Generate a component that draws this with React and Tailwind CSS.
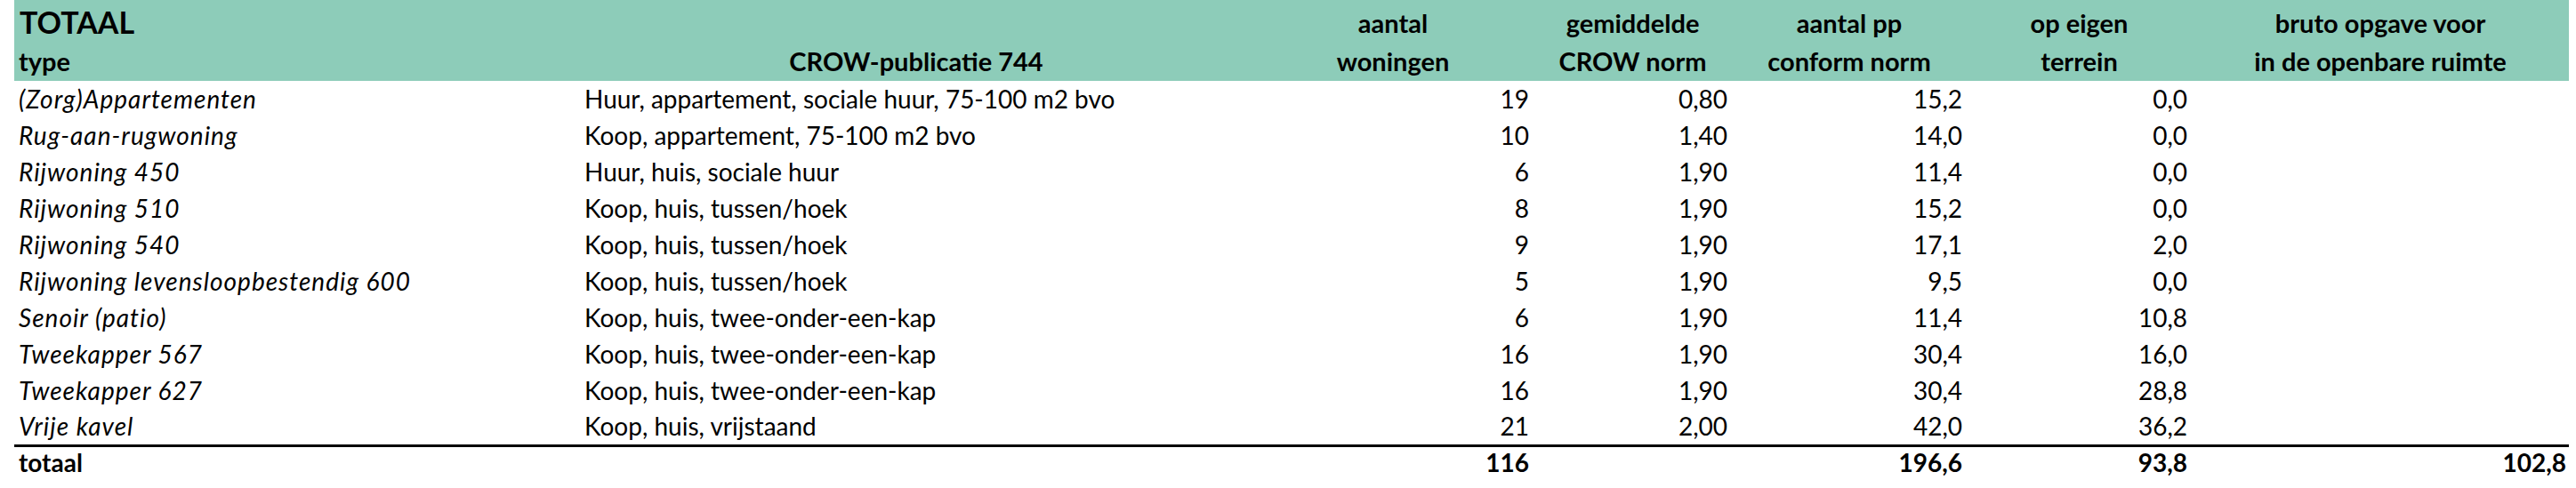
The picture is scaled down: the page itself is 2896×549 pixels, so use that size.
const ROWS = [
  ['(Zorg)Appartementen', 'Huur, appartement, sociale huur, 75-100 m2 bvo', '19', '0,80', '15,2', '0,0'],
  ['Rug-aan-rugwoning', 'Koop, appartement, 75-100 m2 bvo', '10', '1,40', '14,0', '0,0'],
  ['Rijwoning 450', 'Huur, huis, sociale huur', '6', '1,90', '11,4', '0,0'],
  ['Rijwoning 510', 'Koop, huis, tussen/hoek', '8', '1,90', '15,2', '0,0'],
  ['Rijwoning 540', 'Koop, huis, tussen/hoek', '9', '1,90', '17,1', '2,0'],
  ['Rijwoning levensloopbestendig 600', 'Koop, huis, tussen/hoek', '5', '1,90', '9,5', '0,0'],
  ['Senoir (patio)', 'Koop, huis, twee-onder-een-kap', '6', '1,90', '11,4', '10,8'],
  ['Tweekapper 567', 'Koop, huis, twee-onder-een-kap', '16', '1,90', '30,4', '16,0'],
  ['Tweekapper 627', 'Koop, huis, twee-onder-een-kap', '16', '1,90', '30,4', '28,8'],
  ['Vrije kavel', 'Koop, huis, vrijstaand', '21', '2,00', '42,0', '36,2'],
];

const App = () => {
  return (
    <div className="bg-white w-[2896px] h-[549px] overflow-hidden pl-4 text-black font-['Lato',sans-serif] text-[28px] leading-none">
      <table className="table-fixed border-collapse w-[2872px]">
        <colgroup>
          <col className="w-[636px]" />
          <col className="w-[756px]" />
          <col className="w-[316px]" />
          <col className="w-[223px]" />
          <col className="w-[264px]" />
          <col className="w-[253px]" />
          <col className="w-[424px]" />
        </colgroup>
        <thead className="bg-[#8dccb9] font-bold text-[29px]">
          <tr className="h-[47px]">
            <th className="text-left align-bottom pl-[6px] pb-[5px] text-[34px] whitespace-nowrap">TOTAAL</th>
            <th />
            <th className="text-center align-bottom pb-[7px] whitespace-nowrap">aantal</th>
            <th className="text-center align-bottom pb-[7px] whitespace-nowrap">gemiddelde</th>
            <th className="text-center align-bottom pb-[7px] whitespace-nowrap">aantal pp</th>
            <th className="text-center align-bottom pb-[7px] whitespace-nowrap">op eigen</th>
            <th className="text-center align-bottom pb-[7px] whitespace-nowrap">bruto opgave voor</th>
          </tr>
          <tr className="h-[44px]">
            <th className="text-left align-bottom pl-[5px] pb-[8px] whitespace-nowrap">type</th>
            <th className="text-center align-bottom pb-[8px] whitespace-nowrap">CROW-publicatie 744</th>
            <th className="text-center align-bottom pb-[8px] whitespace-nowrap">woningen</th>
            <th className="text-center align-bottom pb-[8px] whitespace-nowrap">CROW norm</th>
            <th className="text-center align-bottom pb-[8px] whitespace-nowrap">conform norm</th>
            <th className="text-center align-bottom pb-[8px] whitespace-nowrap">terrein</th>
            <th className="text-center align-bottom pb-[8px] whitespace-nowrap">in de openbare ruimte</th>
          </tr>
        </thead>
        <tbody>
          {ROWS.map((row, index) => {
            const [type, crow, woningen, norm, pp, eigen] = row;
            const isLast = index === ROWS.length - 1;
            const cell = isLast
              ? 'align-bottom pb-[7px] whitespace-nowrap border-b-[3px] border-black'
              : 'align-bottom pb-[7px] whitespace-nowrap';

            return (
              <tr key={type} className="h-[41px]">
                <td className={`${cell} pl-[5px] italic tracking-[1px]`}>{type}</td>
                <td className={`${cell} pl-[5px]`}>{crow}</td>
                <td className={`${cell} text-right pr-[5px]`}>{woningen}</td>
                <td className={`${cell} text-right pr-[5px]`}>{norm}</td>
                <td className={`${cell} text-right pr-[5px]`}>{pp}</td>
                <td className={`${cell} text-right pr-[5px]`}>{eigen}</td>
                <td className={cell} />
              </tr>
            );
          })}
          <tr className="h-[44px] font-bold">
            <td className="align-bottom pb-[11px] pl-[5px]">totaal</td>
            <td />
            <td className="align-bottom pb-[11px] text-right pr-[5px]">116</td>
            <td />
            <td className="align-bottom pb-[11px] text-right pr-[5px]">196,6</td>
            <td className="align-bottom pb-[11px] text-right pr-[5px]">93,8</td>
            <td className="align-bottom pb-[11px] text-right pr-[3px]">102,8</td>
          </tr>
        </tbody>
      </table>
    </div>
  );
};

export default App;
